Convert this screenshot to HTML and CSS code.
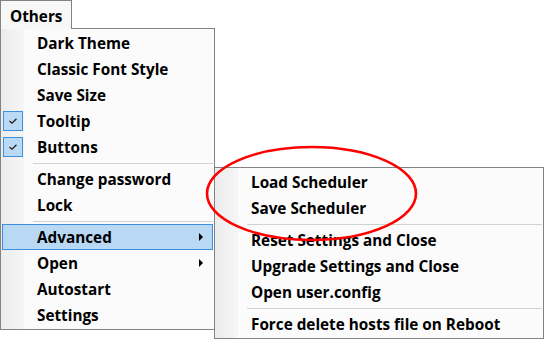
FILE: index.html
```html
<!DOCTYPE html>
<html lang="en">
<head>
  <meta charset="UTF-8" />
  <title>Others menu</title>
  <link rel="stylesheet" href="styles.css">
</head>
<body>
  <div class="screen">
    <div class="tab">Others</div>

    <div class="menu main-menu">
      <div class="item"><span class="icon"></span>Dark Theme</div>
      <div class="item"><span class="icon"></span>Classic Font Style</div>
      <div class="item"><span class="icon"></span>Save Size</div>
      <div class="item"><span class="icon checked"><svg width="8" height="6" viewBox="0 0 8 6"><polyline points="0.5,3 3,5.2 7.5,0.8" /></svg></span>Tooltip</div>
      <div class="item"><span class="icon checked"><svg width="8" height="6" viewBox="0 0 8 6"><polyline points="0.5,3 3,5.2 7.5,0.8" /></svg></span>Buttons</div>
      <div class="sep"></div>
      <div class="item"><span class="icon"></span>Change password</div>
      <div class="item"><span class="icon"></span>Lock</div>
      <div class="sep"></div>
      <div class="item active"><span class="icon"></span>Advanced<span class="arrow"></span></div>
      <div class="item"><span class="icon"></span>Open<span class="arrow"></span></div>
      <div class="item"><span class="icon"></span>Autostart</div>
      <div class="item"><span class="icon"></span>Settings</div>
    </div>

    <!-- submenu of "Advanced" -->
    <div class="menu sub-menu">
      <div class="item"><span class="icon"></span>Load Scheduler</div>
      <div class="item"><span class="icon"></span>Save Scheduler</div>
      <div class="sep"></div>
      <div class="item"><span class="icon"></span>Reset Settings and Close</div>
      <div class="item"><span class="icon"></span>Upgrade Settings and Close</div>
      <div class="item"><span class="icon"></span>Open user.config</div>
      <div class="sep"></div>
      <div class="item"><span class="icon"></span>Force delete hosts file on Reboot</div>
    </div>

    <svg class="mark" width="544" height="339" viewBox="0 0 544 339">
      <ellipse cx="311.5" cy="193.5" rx="104.5" ry="46.5" />
    </svg>
  </div>
</body>
</html>
```

FILE: styles.css
```css
* {
  margin: 0;
  padding: 0;
  box-sizing: border-box;
}
body {
  background: #ffffff;
  font-family: 'Open Sans', 'Liberation Sans', sans-serif;
  font-weight: bold;
  font-size: 15.3px;
  color: #000000;
}
.screen {
  position: relative;
  width: 544px;
  height: 339px;
  overflow: hidden;
}
.tab {
  position: relative;
  z-index: 2;
  width: 72px;
  height: 29px;
  margin-bottom: -1px;
  padding: 2px 0 0 9px;
  line-height: 26px;
  background: #f7f7f7;
  border: 1px solid #828282;
  border-bottom: none;
}
.menu {
  border: 1px solid #828282;
  padding: 1px;
  background-color: #fbfbfb;
  background-image: linear-gradient(90deg, #ececec 0, #f6f6f6 23px, #ffffff 24px, #fbfbfb 25px);
  background-repeat: no-repeat;
}
.main-menu {
  width: 215px;
}
.sub-menu {
  position: absolute;
  left: 214px;
  top: 167px;
  width: 330px;
  z-index: 3;
}
.item {
  display: flex;
  align-items: center;
  height: 26px;
  line-height: 26px;
  white-space: nowrap;
  border: 1px solid transparent;
}
.item .icon {
  display: flex;
  align-items: center;
  justify-content: center;
  width: 20px;
  height: 20px;
  margin-right: 14px;
  flex: none;
}
.item .checked {
  background: #bad9f4;
  border: 1px solid #3d8fe0;
}
.checked polyline {
  fill: none;
  stroke: #1a1a1a;
  stroke-width: 1.2;
}
.item.active {
  background: #b8d8f4;
  border-color: #3d8fe0;
}
.arrow {
  margin-left: auto;
  margin-right: 9px;
  width: 0;
  height: 0;
  border-left: 4px solid #000000;
  border-top: 4px solid transparent;
  border-bottom: 4px solid transparent;
}
.sep {
  height: 6px;
  margin-left: 31px;
  padding-top: 3px;
}
.sep::before {
  content: "";
  display: block;
  height: 1px;
  background: #d2d2d2;
}
.mark {
  position: absolute;
  left: 0;
  top: 0;
  z-index: 4;
  pointer-events: none;
}
.mark ellipse {
  fill: none;
  stroke: #ff0000;
  stroke-width: 2.6;
}
```
